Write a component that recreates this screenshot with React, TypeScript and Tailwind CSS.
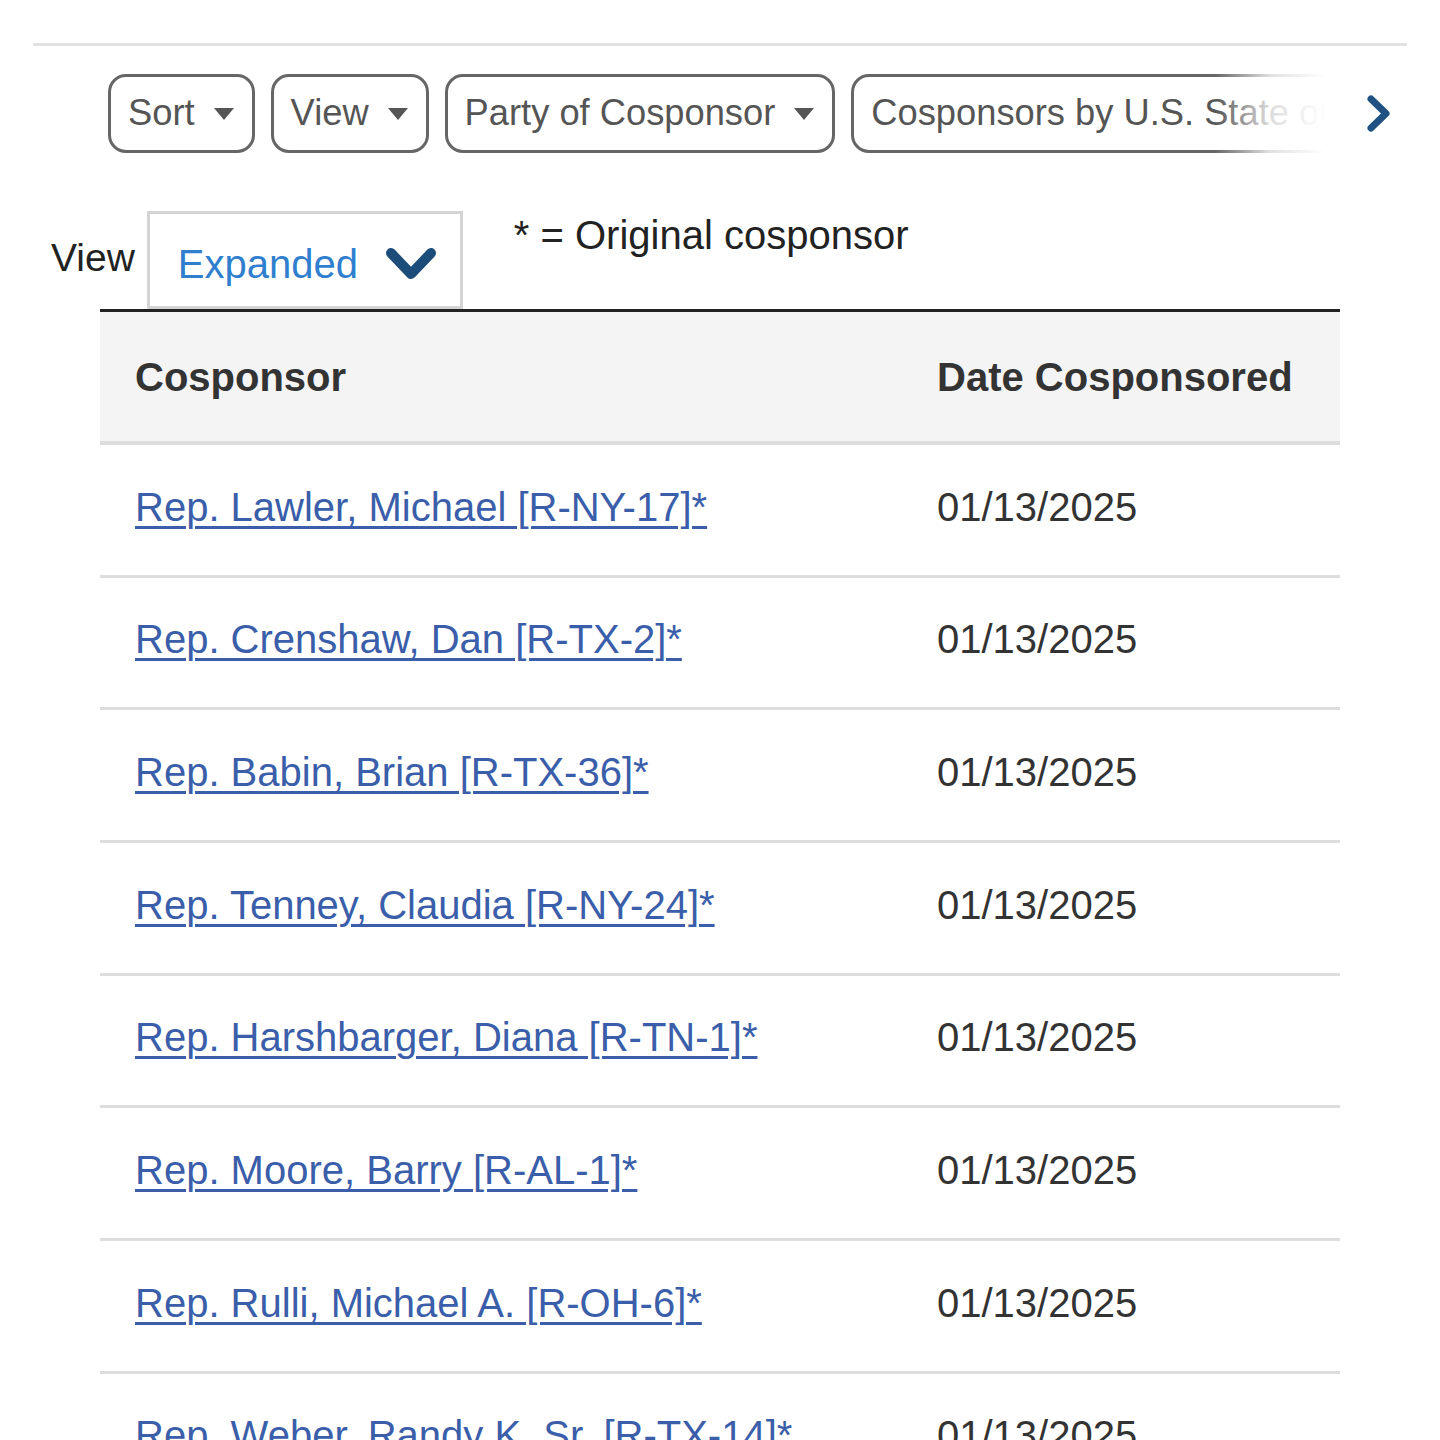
import React from 'react';

const filters = ['Sort', 'View', 'Party of Cosponsor'];

const cosponsors = [
  'Rep. Lawler, Michael [R-NY-17]*',
  'Rep. Crenshaw, Dan [R-TX-2]*',
  'Rep. Babin, Brian [R-TX-36]*',
  'Rep. Tenney, Claudia [R-NY-24]*',
  'Rep. Harshbarger, Diana [R-TN-1]*',
  'Rep. Moore, Barry [R-AL-1]*',
  'Rep. Rulli, Michael A. [R-OH-6]*',
  'Rep. Weber, Randy K. Sr. [R-TX-14]*',
];

function Caret() {
  return (
    <svg width="20" height="12" viewBox="0 0 20 12" aria-hidden>
      <path d="M0 0 H20 L10 12 Z" fill="#555555" />
    </svg>
  );
}

function FilterButton({ label, caret = true }: { label: string; caret?: boolean }) {
  return (
    <button
      type="button"
      className="flex h-[79px] shrink-0 items-center gap-[19px] rounded-[18px] border-[3px] border-[#666666] bg-white pl-[17px] pr-[18px] text-[36.3px] leading-none text-[#555555]"
    >
      <span className="whitespace-nowrap">{label}</span>
      {caret && <Caret />}
    </button>
  );
}

export default function App() {
  return (
    <div className="h-[1440px] w-[1440px] overflow-hidden bg-white font-['Liberation_Sans',Arial,sans-serif]">
      <div className="mx-[33px] mt-[43px] h-[3px] bg-[#e2e2e2]" />

      {/* filter strip */}
      <div className="mt-[28px] flex items-center">
        <div className="relative ml-[108px] w-[1217px] overflow-hidden">
          <div className="flex gap-[16px]">
            {filters.map((f) => (
              <FilterButton key={f} label={f} />
            ))}
            <FilterButton label="Cosponsors by U.S. State or Territory" />
          </div>
          <div className="pointer-events-none absolute inset-y-0 right-0 w-[110px] bg-gradient-to-r from-white/0 via-white/80 to-white" />
        </div>
        <svg className="ml-[41px]" width="26" height="37" viewBox="0 0 26 37" aria-hidden>
          <polyline
            points="5,4 20,18.5 5,33"
            fill="none"
            stroke="#1f5282"
            strokeWidth="7"
            strokeLinecap="round"
            strokeLinejoin="round"
          />
        </svg>
      </div>

      {/* view selector */}
      <div className="mt-[58px] flex items-start pl-[51px]">
        <span className="mt-[27px] text-[39px] leading-none text-[#222222]">View</span>
        <div className="ml-[12px] flex h-[98px] w-[316px] items-start justify-between border-[3px] border-[#d4d4d4] pl-[28px] pr-[23px] pt-[30px]">
          <span className="text-[40px] leading-[40px] text-[#2f7fce]">Expanded</span>
          <svg className="mt-[2px]" width="52" height="36" viewBox="0 0 52 36" aria-hidden>
            <polyline
              points="6,7 26,28 46,7"
              fill="none"
              stroke="#1b4c7a"
              strokeWidth="10"
              strokeLinecap="round"
              strokeLinejoin="round"
            />
          </svg>
        </div>
        <span className="ml-[51px] mt-[4px] text-[40px] leading-none text-[#222222]">* = Original cosponsor</span>
      </div>

      {/* table */}
      <div className="ml-[100px] w-[1240px]">
        <div className="grid h-[136px] grid-cols-[837px_1fr] items-center border-b-4 border-t-[3px] border-b-[#dddddd] border-t-[#222222] bg-[#f4f4f4] text-[40px] font-bold leading-none text-[#333333]">
          <div className="pl-[35px]">Cosponsor</div>
          <div>Date Cosponsored</div>
        </div>
        {cosponsors.map((name) => (
          <div
            key={name}
            className="grid h-[132.67px] grid-cols-[837px_1fr] items-center border-b-[3px] border-[#dddddd] pb-[6px] text-[40px] leading-none"
          >
            <div className="pl-[35px]">
              <a
                href="#"
                className="whitespace-nowrap text-[#3a5ea9] underline decoration-[3px] underline-offset-[5px]"
              >
                {name}
              </a>
            </div>
            <div className="text-[#333333]">01/13/2025</div>
          </div>
        ))}
      </div>
    </div>
  );
}
